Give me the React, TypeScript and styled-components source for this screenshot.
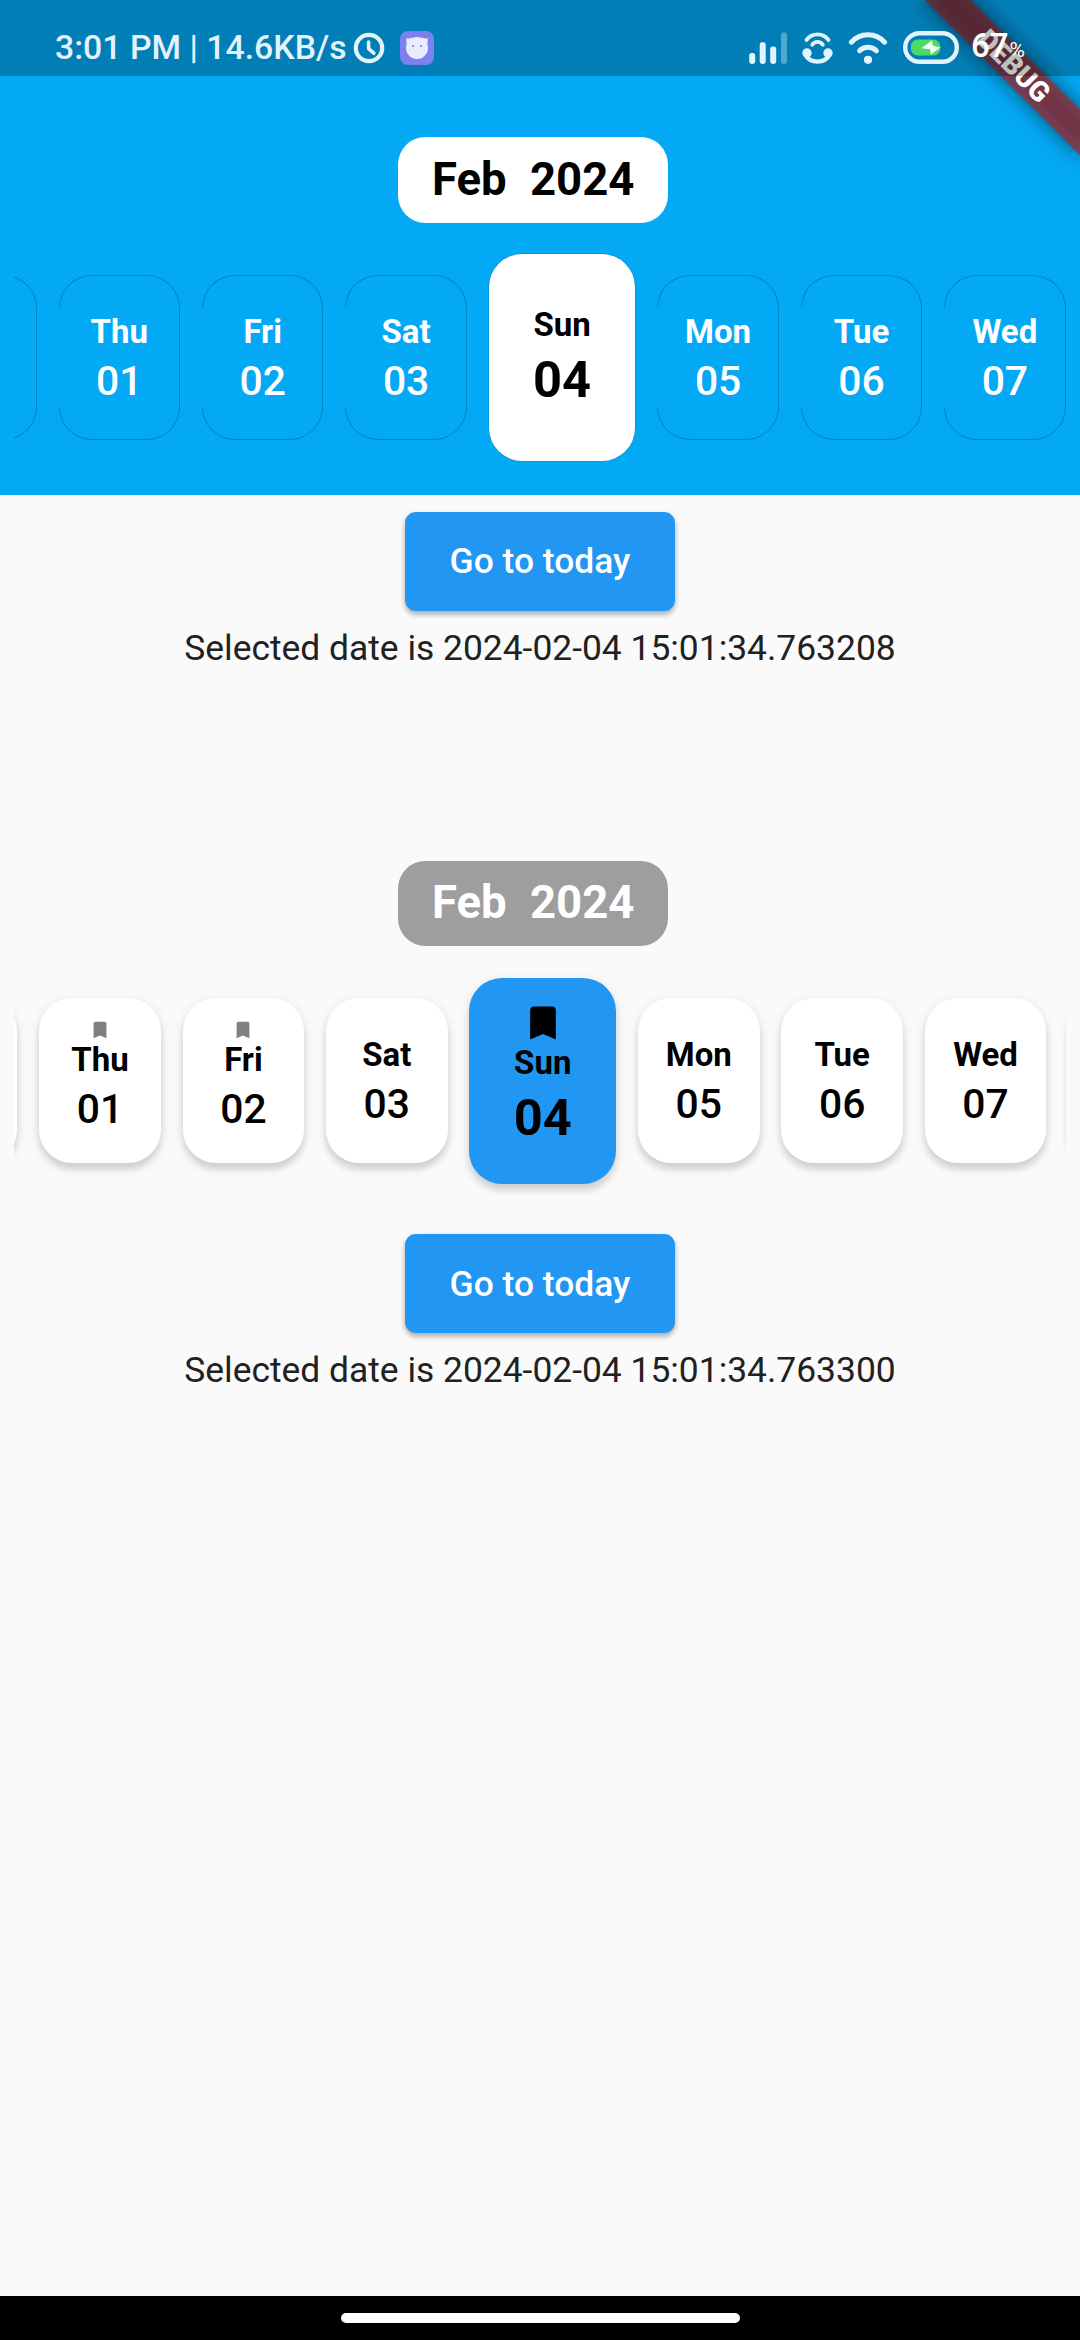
import React from 'react';
import styled, { createGlobalStyle, css } from 'styled-components';

const GlobalStyle = createGlobalStyle`
  *, *::before, *::after { box-sizing: border-box; }
  html, body { margin: 0; padding: 0; background: #fafafa; }
  body { font-family: Roboto, "Noto Sans", sans-serif; }
`;

type Tone = 'sky' | 'light';

const Screen = styled.div`
  position: relative;
  display: flex;
  flex-direction: column;
  width: 1080px;
  height: 2340px;
  overflow: hidden;
  background: #fafafa;
  color: #212121;
`;

const StatusBar = styled.header`
  position: absolute;
  inset: 0 0 auto 0;
  z-index: 3;
  display: flex;
  align-items: center;
  justify-content: space-between;
  height: 76px;
  padding: 19px 55px 0 55px;
  background: rgba(0, 0, 0, 0.25);
  color: #e2f3fc;
`;

const StatusGroup = styled.div`
  display: flex;
  align-items: center;
`;

const Clock = styled.span`
  font-size: 33.8px;
  font-weight: 500;
  line-height: 40px;
  white-space: nowrap;
`;

const StatusIcon = styled.svg<{ $gap?: number }>`
  display: block;
  flex: none;
  margin-left: ${({ $gap = 0 }) => $gap}px;
`;

const Percent = styled.div`
  display: flex;
  align-items: baseline;
  margin-left: 12px;
  color: #ffffff;
  font-size: 33px;
  font-weight: 500;
  line-height: 40px;
`;

const PercentSign = styled.span`
  margin-left: 1px;
  font-size: 21px;
  font-weight: 400;
`;

const Ribbon = styled.div`
  position: absolute;
  top: 77px;
  left: 970px;
  z-index: 2;
  display: flex;
  align-items: center;
  justify-content: center;
  width: 220px;
  height: 33px;
  transform-origin: 110px -77px;
  transform: rotate(45deg);
  color: #ffffff;
  font-size: 28px;
  font-weight: 900;
  line-height: 33px;

  &::before,
  &::after {
    content: '';
    position: absolute;
    inset: 0;
    z-index: -1;
  }

  &::before {
    background: rgba(0, 0, 0, 0.5);
    filter: blur(10.9px);
  }

  &::after {
    background: rgba(183, 28, 28, 0.627);
  }
`;

const Calendar = styled.section<{ $tone: Tone }>`
  display: flex;
  flex-direction: column;
  align-items: center;
  ${({ $tone }) =>
    $tone === 'sky'
      ? css`
          height: 495px;
          padding-top: 137.3px;
          background: #03a9f4;
        `
      : css`
          margin-top: 193px;
        `}
`;

const MonthChip = styled.div<{ $tone: Tone }>`
  display: flex;
  align-items: center;
  justify-content: center;
  gap: 23.3px;
  flex: none;
  width: 269.6px;
  height: 85.6px;
  margin-right: 13.5px;
  border-radius: 27.5px;
  background: ${({ $tone }) => ($tone === 'sky' ? '#ffffff' : '#9e9e9e')};
  color: ${({ $tone }) => ($tone === 'sky' ? '#000000' : '#ffffff')};
  font-size: 45.5px;
  font-weight: 700;
  line-height: 54px;
`;

const Strip = styled.div`
  align-self: stretch;
  display: flex;
  align-items: center;
  flex: none;
  height: 269.4px;
  margin: 0 14px;
  overflow: hidden;
`;

const Days = styled.div<{ $offset: number }>`
  display: flex;
  align-items: center;
  flex: none;
  gap: 21.8px;
  margin-left: ${({ $offset }) => $offset}px;
`;

const DayCard = styled.div<{ $tone: Tone; $selected: boolean; $marked: boolean }>`
  position: relative;
  display: flex;
  flex-direction: column;
  align-items: center;
  justify-content: center;
  flex: none;
  width: ${({ $selected }) => ($selected ? 146.8 : 121.6)}px;
  height: ${({ $selected }) => ($selected ? 206.4 : 165.4)}px;
  padding-top: 1px;
  padding-bottom: ${({ $selected, $marked }) => ($selected ? ($marked ? 15 : 2.5) : $marked ? 10.5 : 0)}px;
  border-radius: 33px;
  color: #000000;

  ${({ $tone, $selected }) =>
    $tone === 'light'
      ? css`
          background: ${$selected ? '#2196f3' : '#ffffff'};
          box-shadow: 0 7px 7px rgba(0, 0, 0, 0.12), 0 2px 12px rgba(0, 0, 0, 0.09);
        `
      : $selected
        ? css`
            background: #ffffff;
            box-shadow: 0 0 0 0.5px rgba(0, 0, 0, 0.18);
          `
        : css`
            border: 1px solid rgba(0, 0, 0, 0.22);
            background: #03a9f4;
            background-clip: padding-box;
            color: #ffffff;

            &::after {
              content: '';
              position: absolute;
              top: 32px;
              bottom: 32px;
              left: -2px;
              width: 3px;
              background: #03a9f4;
            }
          `}
`;

const Bookmark = styled.svg<{ $large: boolean }>`
  display: block;
  flex: none;
  width: ${({ $large }) => ($large ? 44 : 22)}px;
  height: ${({ $large }) => ($large ? 44 : 22)}px;
  margin-bottom: -1.5px;
  fill: ${({ $large }) => ($large ? '#000000' : '#808080')};
`;

const Weekday = styled.span`
  font-size: 33px;
  font-weight: 700;
  line-height: 40px;
`;

const DayNumber = styled.span<{ $selected: boolean }>`
  margin-top: 6px;
  font-size: ${({ $selected }) => ($selected ? 50.6 : 40.8)}px;
  font-weight: ${({ $selected }) => ($selected ? 700 : 500)};
  line-height: ${({ $selected }) => ($selected ? 58 : 47)}px;
`;

const Actions = styled.div<{ $top: number }>`
  display: flex;
  flex-direction: column;
  align-items: center;
  gap: 17px;
  padding-top: ${({ $top }) => $top}px;
`;

const TodayButton = styled.button`
  width: 269.5px;
  height: 99px;
  padding: 0;
  border: 0;
  border-radius: 11px;
  background: #2196f3;
  box-shadow: 0 4px 5px rgba(0, 0, 0, 0.2), 0 2px 6px rgba(0, 0, 0, 0.14);
  color: #ffffff;
  font-family: inherit;
  font-size: 35.4px;
  font-weight: 500;
  line-height: 40px;
`;

const SelectedDate = styled.p`
  margin: 0;
  font-size: 35.4px;
  line-height: 40px;
  white-space: nowrap;
`;

const NavBar = styled.footer`
  display: flex;
  justify-content: center;
  height: 44px;
  margin-top: auto;
  padding-top: 17px;
  background: #000000;
`;

const HomePill = styled.div`
  width: 399px;
  height: 10px;
  border-radius: 5px;
  background: #ffffff;
`;

interface Day {
  name: string;
  num: string;
  selected?: boolean;
}

const days: Day[] = [
  { name: 'Wed', num: '31' },
  { name: 'Thu', num: '01' },
  { name: 'Fri', num: '02' },
  { name: 'Sat', num: '03' },
  { name: 'Sun', num: '04', selected: true },
  { name: 'Mon', num: '05' },
  { name: 'Tue', num: '06' },
  { name: 'Wed', num: '07' },
  { name: '', num: '' },
];

function AlarmIcon() {
  return (
    <StatusIcon $gap={6.5} width="32" height="32" viewBox="0 0 32 32" fill="none" stroke="currentColor">
      <circle cx="16" cy="16" r="13.2" strokeWidth="4.2" />
      <path d="M15.6 10v6.6l5.2 4.6" strokeWidth="3.6" strokeLinecap="round" strokeLinejoin="round" />
    </StatusIcon>
  );
}

function CatIcon() {
  return (
    <StatusIcon $gap={15} width="34" height="34" viewBox="0 0 34 34">
      <rect width="34" height="34" rx="8" fill="#7b82f0" />
      <g fill="#ecebfd">
        <circle cx="17" cy="17" r="11" />
        <path d="M6.600 7c1.400.8 3.200.8 4.600-.4l2 2.400-5.600 5C6 11.800 6 9.200 6.600 7z" />
        <path d="M27.400 7c-1.400.8-3.200.8-4.600-.4l-2 2.400 5.600 5c1.600-2.200 1.600-4.800 1-7z" />
      </g>
      <circle cx="13" cy="15" r="1.2" fill="#8f93f1" />
      <circle cx="21" cy="15" r="1.2" fill="#8f93f1" />
    </StatusIcon>
  );
}

function SignalIcon() {
  return (
    <StatusIcon width="38" height="32" viewBox="0 0 38 32" fill="currentColor">
      <rect x="0.2" y="21" width="6" height="11" rx="2.4" />
      <rect x="10.7" y="10.3" width="6" height="21.7" rx="2.4" />
      <rect x="21.2" y="14.5" width="6" height="17.5" rx="2.4" />
      <rect x="32" y="0.5" width="6" height="31.5" rx="2.4" opacity="0.35" />
    </StatusIcon>
  );
}

function HotspotIcon() {
  return (
    <StatusIcon $gap={14.5} width="31" height="32" viewBox="0 0 31 32" fill="none" stroke="currentColor" strokeLinecap="round">
      <path d="M4.500 8C10 .6 21 .6 26.500 8" strokeWidth="3.8" />
      <path d="M10.200 12.800c2.600-3.800 8-3.800 10.600 0" strokeWidth="3.8" />
      <path d="M3.500 23c4.500 8.800 19.500 8.800 24 0" strokeWidth="4.2" />
      <circle cx="5" cy="21" r="4.700" fill="currentColor" stroke="none" />
      <circle cx="26" cy="21" r="4.700" fill="currentColor" stroke="none" />
    </StatusIcon>
  );
}

function WifiIcon() {
  return (
    <StatusIcon $gap={15} width="40" height="32" viewBox="0 0 40 32" fill="none" stroke="currentColor" strokeLinecap="round">
      <path d="M3.400 10.200C12.500.4 27.500.4 36.600 10.200" strokeWidth="5" />
      <path d="M11.600 18.800c4.800-4.600 12-4.600 16.800 0" strokeWidth="5" />
      <circle cx="20" cy="27.800" r="4.100" fill="currentColor" stroke="none" />
    </StatusIcon>
  );
}

function BatteryIcon() {
  return (
    <StatusIcon $gap={15.5} width="56" height="33" viewBox="0 0 56 33">
      <rect x="2.2" y="2.2" width="51.6" height="28.6" rx="14.3" fill="none" stroke="currentColor" strokeWidth="4.4" />
      <rect x="7.8" y="8.5" width="29.5" height="16" rx="7" fill="#4cd964" />
      <path d="M18.300 17.200 29.200 9.200l.4 5.200 7.900 2-9.700 7-.6-5.200z" fill="#f3fff3" />
    </StatusIcon>
  );
}

interface CalendarProps {
  tone: Tone;
  offset: number;
  marked: string[];
}

function CalendarTimeline({ tone, offset, marked }: CalendarProps) {
  return (
    <Calendar $tone={tone}>
      <MonthChip $tone={tone}>
        <span>Feb</span>
        <span>2024</span>
      </MonthChip>
      <Strip>
        <Days $offset={offset}>
          {days.map(({ name, num, selected = false }, i) => {
            const isMarked = marked.includes(num);
            const clipped = i === 0 || i === days.length - 1;
            return (
              <DayCard key={i} $tone={tone} $selected={selected} $marked={isMarked}>
                {isMarked && (
                  <Bookmark $large={selected} viewBox="0 0 24 24">
                    <path d="M17 3H7c-1.100 0-2 .9-2 2v16l7-3 7 3V5c0-1.100-.9-2-2-2z" />
                  </Bookmark>
                )}
                {!clipped && <Weekday>{name}</Weekday>}
                {!clipped && <DayNumber $selected={selected}>{num}</DayNumber>}
              </DayCard>
            );
          })}
        </Days>
      </Strip>
    </Calendar>
  );
}

export default function App() {
  return (
    <>
      <GlobalStyle />
      <Screen>
        <StatusBar>
          <StatusGroup>
            <Clock>3:01 PM | 14.6KB/s</Clock>
            <AlarmIcon />
            <CatIcon />
          </StatusGroup>
          <StatusGroup>
            <SignalIcon />
            <HotspotIcon />
            <WifiIcon />
            <BatteryIcon />
            <Percent>
              67<PercentSign>%</PercentSign>
            </Percent>
          </StatusGroup>
        </StatusBar>
        <Ribbon>DEBUG</Ribbon>

        <CalendarTimeline tone="sky" offset={-98.9} marked={[]} />
        <Actions $top={16.5}>
          <TodayButton>Go to today</TodayButton>
          <SelectedDate>Selected date is 2024-02-04 15:01:34.763208</SelectedDate>
        </Actions>

        <CalendarTimeline tone="light" offset={-118.2} marked={['01', '02', '04']} />
        <Actions $top={19}>
          <TodayButton>Go to today</TodayButton>
          <SelectedDate>Selected date is 2024-02-04 15:01:34.763300</SelectedDate>
        </Actions>

        <NavBar>
          <HomePill />
        </NavBar>
      </Screen>
    </>
  );
}
